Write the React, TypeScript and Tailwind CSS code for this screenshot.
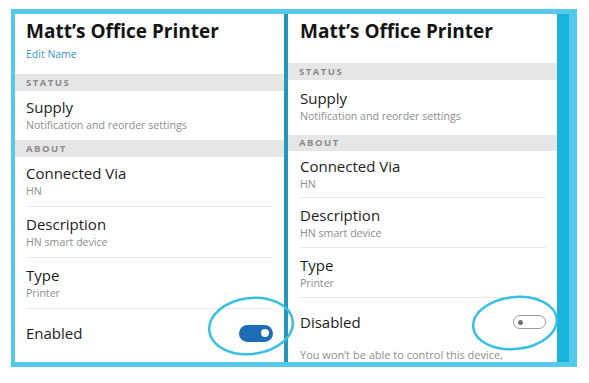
import React from 'react';

type Row = { title: string; sub: string };

const aboutRows: Row[] = [
  { title: 'Connected Via', sub: 'HN' },
  { title: 'Description', sub: 'HN smart device' },
  { title: 'Type', sub: 'Printer' },
];

const SectionBand = ({ label }: { label: string }) => (
  <div className="h-[17px] bg-[#e6e6e6] flex items-center px-[11px]">
    <span className="text-[9.5px] font-bold tracking-[0.16em] text-[#8a8a8a] leading-none">{label}</span>
  </div>
);

const Toggle = ({ on }: { on: boolean }) =>
  on ? (
    <div className="w-[34px] h-[17px] rounded-full bg-[#1d6db4] flex items-center justify-end pr-[4px]">
      <div className="w-[8px] h-[8px] rounded-full bg-white" />
    </div>
  ) : (
    <div className="w-[33px] h-[14px] rounded-full border-[1.5px] border-[#9a9a9a] bg-white flex items-center pl-[4px]">
      <div className="w-[5px] h-[5px] rounded-full bg-[#6f6f6f]" />
    </div>
  );

interface PanelProps {
  editName?: boolean;
  enabled: boolean;
  note?: string;
  padX: string;
}

const DevicePanel: React.FC<PanelProps> = ({ editName, enabled, note, padX }) => {
  return (
    <div className="flex-1 h-full bg-white overflow-hidden flex flex-col">
      <div className={`${padX} pt-[6px]`}>
        <h1 className="text-[19px] font-bold leading-[22px] text-[#141414]">Matt’s Office Printer</h1>
        {editName && (
          <div className="mt-[5px] text-[10.5px] leading-[14px] text-[#3b95c5]">Edit Name</div>
        )}
      </div>

      <div className={editName ? 'mt-[13px]' : 'mt-[21px]'}>
        <SectionBand label="STATUS" />
      </div>
      <div className={`${padX} ${editName ? 'pt-[7px] pb-[8px]' : 'pt-[9px] pb-[12px]'}`}>
        <div className="text-[15px] leading-[18px] text-[#1c1c1c]">Supply</div>
        <div className="mt-[3px] text-[10.6px] leading-[13px] text-[#8d8d8d]">Notification and reorder settings</div>
      </div>

      <SectionBand label="ABOUT" />

      <div className={padX}>
        {aboutRows.map((row, i) => (
          <div
            key={row.title}
            className={`border-b border-[#e9e9e9] ${i === 0 ? (editName ? 'pt-[7px] pb-[8px]' : 'pt-[6px] pb-[6px]') : 'pt-[8px] pb-[7px]'} ${i > 0 && editName ? 'pb-[8px]' : ''}`}
          >
            <div className="text-[15px] leading-[18px] text-[#1c1c1c]">{row.title}</div>
            <div className="mt-[3px] text-[10.6px] leading-[13px] text-[#8d8d8d]">{row.sub}</div>
          </div>
        ))}

        <div className="h-[48px] flex items-center justify-between">
          <span className="text-[15px] text-[#1c1c1c]">{enabled ? 'Enabled' : 'Disabled'}</span>
          <Toggle on={enabled} />
        </div>
        {note && <div className="mt-[2px] text-[11px] leading-[14px] text-[#8d8d8d]">{note}</div>}
      </div>
    </div>
  );
};

export default function App() {
  return (
    <div className="relative w-[589px] h-[383px] bg-white overflow-hidden" style={{ fontFamily: '"Open Sans", "Noto Sans", sans-serif' }}>
      <div className="ml-[11px] mt-[9px] w-[566px] h-[358px] border-[#55c9ec] border-l-[4px] border-t-[5px] border-b-[5px] border-r-[8px] flex">
        <DevicePanel editName enabled padX="px-[11px]" />
        <div className="w-[4px] h-full bg-[#2595b9]" />
        <DevicePanel enabled={false} padX="pl-[12px] pr-[11px]" note="You won’t be able to control this device," />
        <div className="w-[12px] h-full bg-[#19b4db]" />
      </div>

      {/* hand-drawn highlight rings over the toggles */}
      <svg className="absolute inset-0 pointer-events-none" width="589" height="383">
        <ellipse cx="251" cy="326" rx="42" ry="28" transform="rotate(-7 251 326)" fill="none" stroke="#38bfe2" strokeWidth="2.5" />
        <ellipse cx="515" cy="323" rx="42" ry="26" transform="rotate(-6 515 323)" fill="none" stroke="#38bfe2" strokeWidth="2.5" />
      </svg>
    </div>
  );
}
